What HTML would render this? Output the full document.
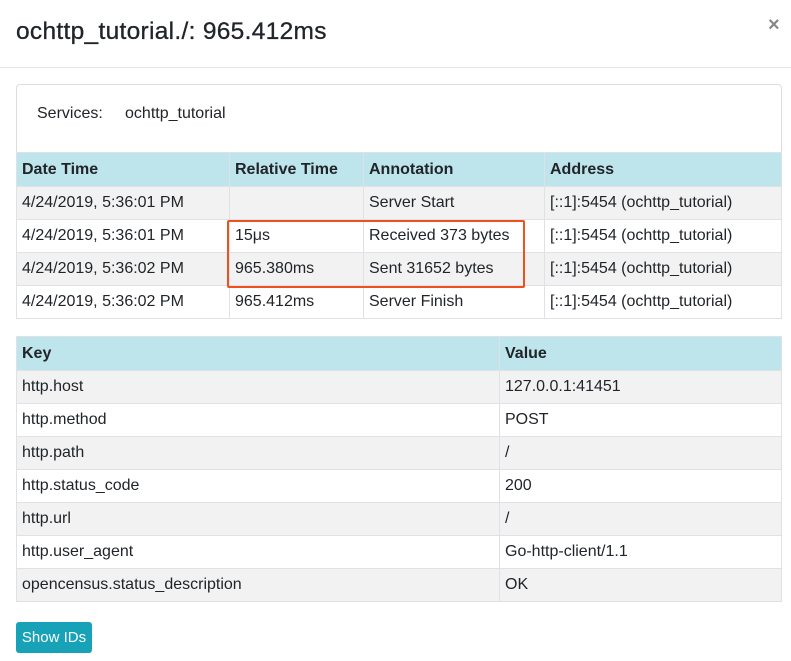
<!DOCTYPE html>
<html><head><style>
body{margin:0;width:791px;height:661px;background:#fff;font-family:"Liberation Sans",sans-serif;color:#212529;position:relative;overflow:hidden}
h1{position:absolute;left:16px;top:18px;margin:0;font-size:24.5px;font-weight:400;letter-spacing:0.3px;-webkit-text-stroke:0.3px #212529}
.x{position:absolute;left:768px;top:14px;font-size:20px;color:#888;font-weight:bold}
.hr{position:absolute;left:0;top:67px;width:791px;height:1px;background:#e5e5e5}
.card{position:absolute;left:16px;top:84px;width:764px;height:80px;border:1px solid #ddd;border-radius:4px}
.svc{position:absolute;left:37px;top:105px;font-size:16px}
table{position:absolute;left:16px;border-collapse:collapse;font-size:16px;table-layout:fixed}
td,th{border:1px solid #dee2e6;padding:0 5px;text-align:left;white-space:nowrap;height:32px}
th{background:#bee5eb;font-weight:bold;height:33px}
tr.g td{background:#f2f2f2}
.box{position:absolute;left:227px;top:220px;width:294px;height:64px;border:2px solid #f0501e;border-radius:2px}
.btn{position:absolute;left:16px;top:622px;width:76px;height:31px;background:#17a2b8;color:#fff;border-radius:3px;font-size:15px;line-height:31px;text-align:center}
</style></head><body>
<h1>ochttp_tutorial./: 965.412ms</h1>
<div class="x">×</div>
<div class="hr"></div>
<div class="card"></div>
<div class="svc">Services:&nbsp;&nbsp;&nbsp;&nbsp; ochttp_tutorial</div>
<table style="top:152px;width:765px">
<colgroup><col style="width:213px"><col style="width:134px"><col style="width:181px"><col style="width:237px"></colgroup>
<tr><th>Date Time</th><th>Relative Time</th><th>Annotation</th><th>Address</th></tr>
<tr class="g"><td>4/24/2019, 5:36:01 PM</td><td></td><td>Server Start</td><td>[::1]:5454 (ochttp_tutorial)</td></tr>
<tr><td>4/24/2019, 5:36:01 PM</td><td>15μs</td><td>Received 373 bytes</td><td>[::1]:5454 (ochttp_tutorial)</td></tr>
<tr class="g"><td>4/24/2019, 5:36:02 PM</td><td>965.380ms</td><td>Sent 31652 bytes</td><td>[::1]:5454 (ochttp_tutorial)</td></tr>
<tr><td>4/24/2019, 5:36:02 PM</td><td>965.412ms</td><td>Server Finish</td><td>[::1]:5454 (ochttp_tutorial)</td></tr>
</table>
<div class="box"></div>
<table style="top:336px;width:765px">
<colgroup><col style="width:483px"><col style="width:282px"></colgroup>
<tr><th>Key</th><th>Value</th></tr>
<tr class="g"><td>http.host</td><td>127.0.0.1:41451</td></tr>
<tr><td>http.method</td><td>POST</td></tr>
<tr class="g"><td>http.path</td><td>/</td></tr>
<tr><td>http.status_code</td><td>200</td></tr>
<tr class="g"><td>http.url</td><td>/</td></tr>
<tr><td>http.user_agent</td><td>Go-http-client/1.1</td></tr>
<tr class="g"><td>opencensus.status_description</td><td>OK</td></tr>
</table>
<div class="btn">Show IDs</div>
</body></html>
